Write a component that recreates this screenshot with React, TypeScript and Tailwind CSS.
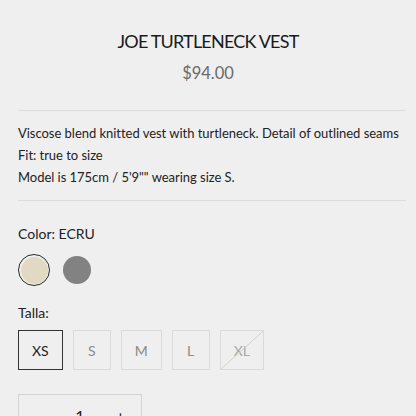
const sizes = [
  { label: "XS", selected: true },
  { label: "S" },
  { label: "M" },
  { label: "L" },
  { label: "XL", soldOut: true },
];

export default function App() {
  return (
    <div className="min-h-[416px] w-[416px] overflow-hidden bg-[#efefef] font-['Lato',sans-serif] text-[#222]">
      {/* Title and price */}
      <div className="flex flex-col items-center pt-[29px]">
        <h1 className="text-[18px] leading-[24px] tracking-[-0.8px] text-[#1a1a1a]">JOE TURTLENECK VEST</h1>
        <p className="mt-[8px] text-[16.5px] leading-[24px] text-[#6a6a6a]">$94.00</p>
      </div>

      <div className="ml-[18px] mt-[25px] w-[388px] border-t border-[#dcdcdc]" />

      {/* Description */}
      <div className="ml-[18px] mt-[11px] text-[13px] leading-[22px] tracking-[-0.03px]">
        <p>Viscose blend knitted vest with turtleneck. Detail of outlined seams</p>
        <p>Fit: true to size</p>
        <p>Model is 175cm / 5'9"" wearing size S.</p>
      </div>

      <div className="ml-[18px] mt-[12px] w-[388px] border-t border-[#dcdcdc]" />

      {/* Color */}
      <div className="ml-[18px] mt-[23px]">
        <p className="text-[14px] leading-[20px]">Color: ECRU</p>
        <div className="mt-[10px] flex items-center gap-[13px]">
          <div className="flex h-[32px] w-[32px] items-center justify-center rounded-full border-[1.5px] border-[#2a2a2a]">
            <div className="h-[27px] w-[27px] rounded-full bg-[#e2d9c3]" />
          </div>
          <div className="h-[28px] w-[28px] rounded-full bg-[#828282]" />
        </div>
      </div>

      {/* Sizes */}
      <div className="ml-[18px] mt-[17px]">
        <p className="text-[14px] leading-[20px]">Talla:</p>
        <div className="mt-[7px] flex gap-[10px]">
          {sizes.map((s) => (
            <div
              key={s.label}
              className={
                s.selected
                  ? "relative flex h-[40px] min-w-[38px] items-center justify-center border border-[#333] px-[13px] text-[14px] text-[#222]"
                  : s.soldOut
                  ? "relative flex h-[40px] min-w-[38px] items-center justify-center overflow-hidden border border-[#dadada] px-[13px] text-[14px] text-[#a8a8a8]"
                  : "relative flex h-[40px] min-w-[38px] items-center justify-center border border-[#dadada] px-[13px] text-[14px] text-[#8a8a8a]"
              }
            >
              {s.label}
              {s.soldOut && (
                <svg className="absolute inset-0 h-full w-full" viewBox="0 0 100 100" preserveAspectRatio="none">
                  <line x1="0" y1="100" x2="100" y2="0" stroke="#d0d0d0" strokeWidth="1" vectorEffect="non-scaling-stroke" />
                </svg>
              )}
            </div>
          ))}
        </div>
      </div>

      {/* Quantity */}
      <div className="ml-[18px] mt-[24px] flex h-[44px] w-[124px] items-center border border-[#d4d4d4] text-[16px]">
        <span className="w-[41px] text-center">−</span>
        <span className="flex-1 text-center">1</span>
        <span className="w-[41px] text-center">+</span>
      </div>
    </div>
  );
}
